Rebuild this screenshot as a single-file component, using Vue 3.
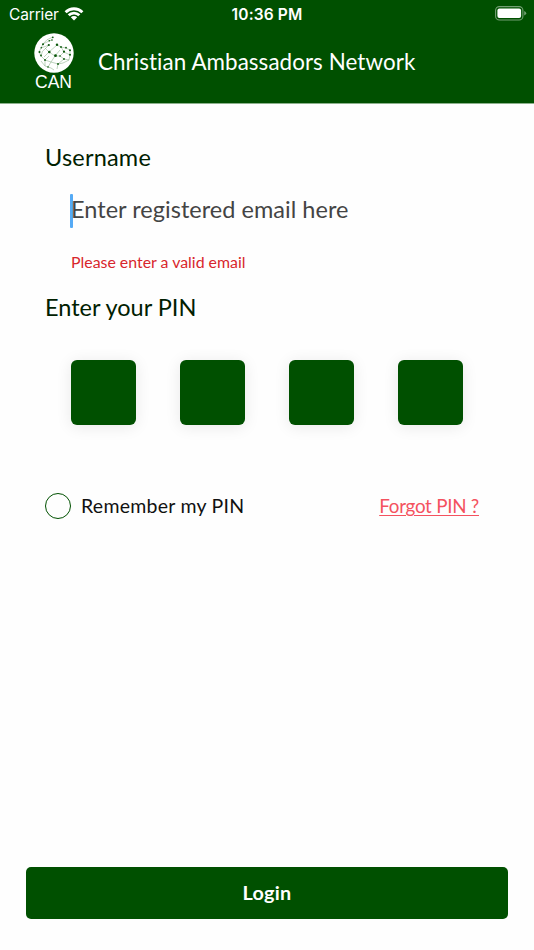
<template>
  <div class="screen">
    <header class="header">
      <div class="status-bar">
        <div class="status-left">
          <span class="carrier">Carrier</span>
          <svg class="wifi" width="20" height="15" viewBox="0 0 20 15">
            <path d="M0.6 5.2 A13.4 13.4 0 0 1 19.4 5.2 L17.4 7.2 A10.5 10.5 0 0 0 2.6 7.2 Z" />
            <path d="M3.7 8.3 A9 9 0 0 1 16.3 8.3 L14.3 10.3 A6.2 6.2 0 0 0 5.7 10.3 Z" />
            <path d="M6.8 11.3 A4.6 4.6 0 0 1 13.2 11.3 L10 14.5 Z" />
          </svg>
        </div>
        <span class="time">10:36 PM</span>
        <div class="status-right">
          <svg width="32" height="15" viewBox="0 0 32 15">
            <rect x="0.6" y="0.6" width="27.3" height="13.4" rx="3.8" class="battery-case" />
            <rect x="2.4" y="2.5" width="23.7" height="9.6" rx="2" fill="#fff" />
            <path d="M29.2 5 Q31.2 5.8 31.2 7.3 Q31.2 8.8 29.2 9.6 Z" fill="#fff" opacity="0.45" />
          </svg>
        </div>
      </div>
      <div class="brand">
        <div class="logo">
          <svg class="globe" width="40" height="40" viewBox="0 0 40 40">
            <circle cx="20" cy="20" r="19.7" fill="#fff" />
            <path class="mesh" d="M9 11 Q12 6 19 4 M9 11 L15 8 L18 7 M7 15 L9 11 M5 19 L7 15 L15 12 M5 19 L7 23 Q8 17 11 16 L15 12 M15 19 L23 12 L27 14 L32 15 L36 17 L36 22 L30 19 L27 14 M10 24 L15 19 L21 23 L26 17 M11 15 L15 19 M21 23 L26 23 L30 19 M7 23 L11 27 L15 23 M11 27 L17 29 L21 23 M17 29 L24 31 L30 26 L26 23 M30 26 L35 27 L36 22 M24 31 L29 30 L35 27 M7 28 L11 33 L17 35 L20 37 M11 27 L11 33 M17 29 L14 34 M24 31 L23 36" />
            <circle v-for="(dot, i) in dots" :key="i" class="dot" :cx="dot[0]" :cy="dot[1]" :r="dot[2]" />
          </svg>
          <span class="logo-text">CAN</span>
        </div>
        <h1 class="title">Christian Ambassadors Network</h1>
      </div>
    </header>

    <main class="form">
      <label class="label username">Username</label>
      <div class="email-field">
        <span class="caret"></span>
        <span class="placeholder">Enter registered email here</span>
      </div>
      <p class="error">Please enter a valid email</p>

      <label class="label pin">Enter your PIN</label>
      <div class="pin-row">
        <div v-for="n in 4" :key="n" class="pin-box"></div>
      </div>

      <div class="options">
        <div class="remember" @click="remember = !remember">
          <span class="radio" :class="{ checked: remember }"></span>
          <span class="remember-text">Remember my PIN</span>
        </div>
        <a class="forgot">Forgot PIN ?</a>
      </div>
    </main>

    <footer class="footer">
      <button class="login"><span>Login</span></button>
    </footer>
  </div>
</template>

<script setup>
import { ref } from 'vue'

const remember = ref(false)

// Nodes of the globe mesh: x, y, radius
const dots = [
  [18.8, 4.3, 0.9], [18, 7, 0.8], [9, 11.3, 1], [15.3, 7.8, 0.8], [14.8, 12, 1.1],
  [7.3, 14.7, 0.8], [5.5, 19, 1], [7, 22.5, 0.9], [15.3, 19, 1.3], [23, 11.7, 1.2],
  [27, 14, 0.9], [32, 14.7, 0.9], [36, 17.3, 1], [30, 18.7, 1.1], [21.5, 22.7, 1.4],
  [26, 23, 0.8], [30, 26, 0.9], [36, 21.7, 1], [11, 27, 0.9], [24, 31, 0.9],
  [14, 34, 0.8]
]
</script>

<style>
body {
  margin: 0;
  background: #fefefe;
}
</style>

<style scoped>
.screen {
  width: 534px;
  height: 950px;
  display: flex;
  flex-direction: column;
  background: #fefefe;
  font-family: Lato, 'Noto Sans', sans-serif;
  font-variant-ligatures: none;
  overflow: hidden;
}

/* Header */
.header {
  height: 104px;
  flex: none;
  box-sizing: border-box;
  background: #005000;
  border-bottom: 1px solid #8cb18c;
  color: #fff;
}

.status-bar {
  height: 28px;
  display: grid;
  grid-template-columns: 1fr auto 1fr;
  align-items: center;
  padding: 0 7px 0 9px;
  box-sizing: border-box;
  font-family: Inter, sans-serif;
}

.status-left {
  display: flex;
  align-items: center;
  gap: 5px;
}

.carrier {
  font-size: 15.5px;
  letter-spacing: -0.15px;
  line-height: 29px;
}

.wifi {
  fill: #fff;
  margin-top: -3px;
}

.time {
  font-size: 15.5px;
  font-weight: 600;
  letter-spacing: 0.15px;
  line-height: 29px;
  margin-right: 2px;
}

.status-right {
  display: flex;
  justify-content: flex-end;
}

.status-right svg {
  margin-top: -2px;
}

.battery-case {
  fill: none;
  stroke: #fff;
  stroke-opacity: 0.45;
  stroke-width: 1.1;
}

.brand {
  display: flex;
  padding-left: 22px;
}

.logo {
  width: 63px;
  height: 66px;
  display: flex;
  flex-direction: column;
  align-items: center;
  padding-top: 5px;
  box-sizing: border-box;
}

.globe {
  flex: none;
}

.mesh {
  fill: none;
  stroke: #7fa97f;
  stroke-width: 0.5;
}

.dot {
  fill: #0b570b;
}

.logo-text {
  font-family: 'Liberation Sans', sans-serif;
  font-size: 17.5px;
  line-height: 18px;
}

.title {
  margin: 0 0 0 13px;
  font-size: 22.4px;
  font-weight: 400;
  letter-spacing: 0.07px;
  line-height: 68px;
  white-space: nowrap;
}

/* Form */
.form {
  flex: 1;
  padding: 39px 55px 0 45px;
}

.label {
  display: block;
  font-size: 23.5px;
  line-height: 28px;
  color: #002000;
}

.username {
  letter-spacing: 0.2px;
}

.email-field {
  position: relative;
  margin: 23px 0 0 26px;
  height: 34px;
}

.caret {
  position: absolute;
  left: -1px;
  top: 0;
  width: 3px;
  height: 34px;
  border-radius: 1px;
  background: #55aaf5;
}

.placeholder {
  position: relative;
  font-size: 23.5px;
  letter-spacing: 0.03px;
  line-height: 31px;
  color: #444;
  white-space: nowrap;
}

.error {
  margin: 24px 0 0 26px;
  font-size: 15.9px;
  line-height: 20px;
  color: #d8262c;
}

.pin {
  margin-top: 21px;
}

.pin-row {
  display: flex;
  justify-content: space-between;
  width: 392px;
  margin: 39px 0 0 26px;
}

.pin-box {
  width: 65px;
  height: 65px;
  border-radius: 6px;
  background: #005000;
  box-shadow: 0 2px 16px rgba(0, 0, 0, 0.09);
}

.options {
  display: flex;
  align-items: center;
  justify-content: space-between;
  margin-top: 68px;
}

.remember {
  display: flex;
  align-items: center;
  gap: 10px;
}

.radio {
  width: 26px;
  height: 26px;
  box-sizing: border-box;
  border: 1.4px solid #005000;
  border-radius: 50%;
}

.radio.checked {
  background: #005000;
}

.remember-text {
  font-size: 19.5px;
  letter-spacing: 0.25px;
  line-height: 26px;
  color: #111;
}

.forgot {
  font-size: 18.8px;
  letter-spacing: -0.25px;
  line-height: 26px;
  color: #f4525f;
  text-decoration: underline;
  text-decoration-thickness: 1px;
  text-underline-offset: 2px;
}

/* Footer */
.footer {
  padding: 0 26px 31px;
}

.login {
  display: block;
  width: 100%;
  height: 52px;
  padding: 0 0 2px;
  border: 0;
  border-radius: 5px;
  background: #005000;
  color: #fff;
  font-family: inherit;
  font-size: 19.8px;
  font-weight: 700;
  letter-spacing: 0.3px;
}
</style>
